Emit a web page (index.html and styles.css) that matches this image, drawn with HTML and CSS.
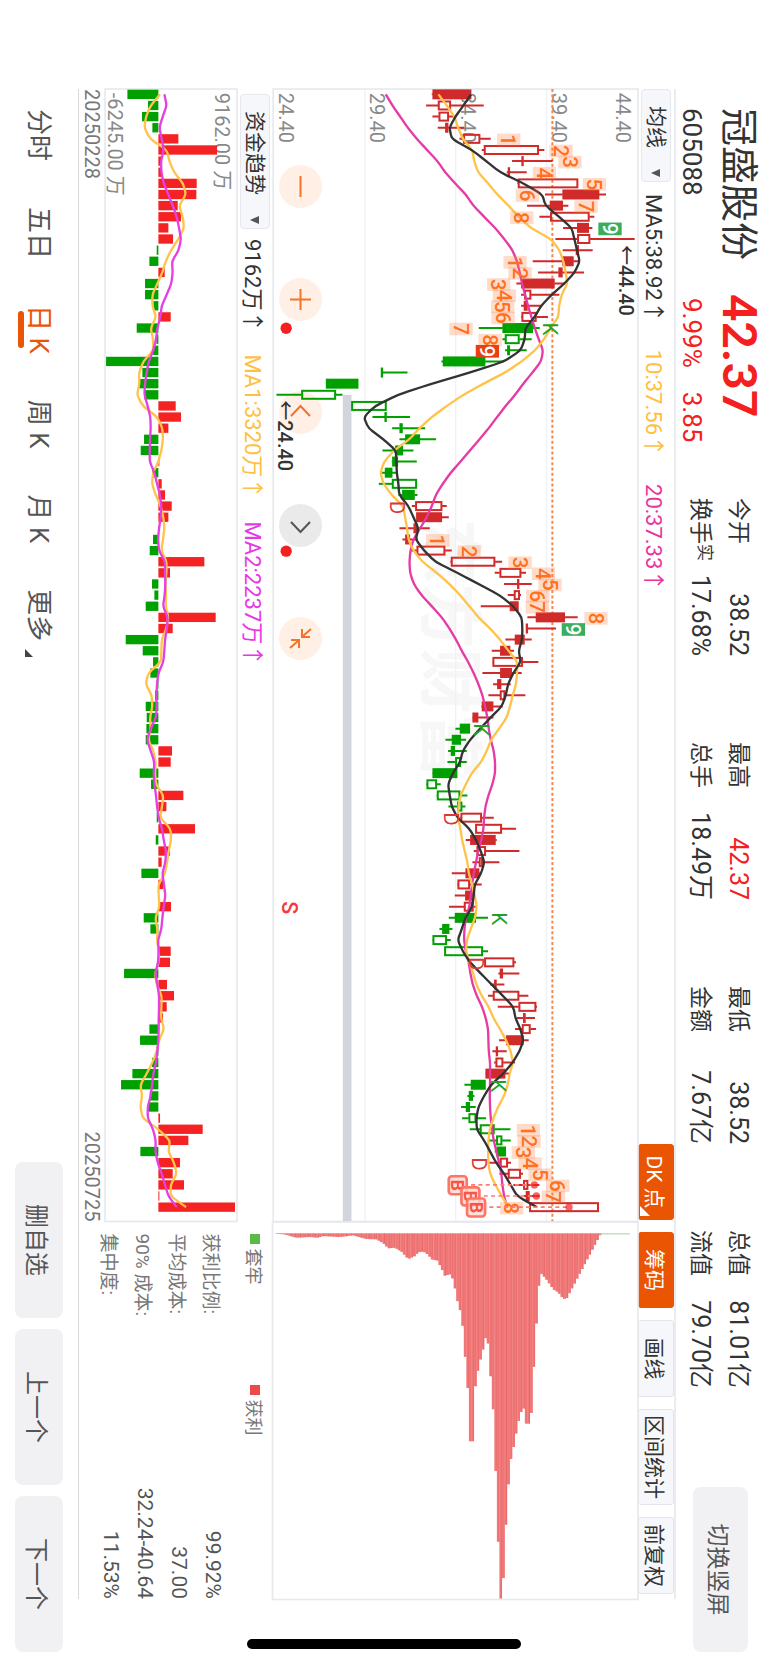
FILE: index.html
```html
<!DOCTYPE html>
<html lang="zh-CN">
<head>
<meta charset="utf-8">
<meta name="viewport" content="width=device-width, initial-scale=1">
<title>冠盛股份 605088</title>
<link rel="stylesheet" href="styles.css">
</head>
<body>
<div class="screen">
  <header class="quote">
    <div class="quote-main">
      <h1 class="name">冠盛股份</h1>
      <strong class="price">42.37</strong>
      <span class="code">605088</span>
      <span class="change"><span>9.99%</span><span>3.85</span></span>
    </div>
    <dl class="stats">
      <div class="stat"><dt>今开</dt><dd>38.52</dd></div>
      <div class="stat"><dt>最高</dt><dd class="up">42.37</dd></div>
      <div class="stat"><dt>最低</dt><dd>38.52</dd></div>
      <div class="stat"><dt>总值</dt><dd>81.01亿</dd></div>
      <div class="stat"><dt>换手<sup>实</sup></dt><dd>17.68%</dd></div>
      <div class="stat"><dt>总手</dt><dd>18.49万</dd></div>
      <div class="stat"><dt>金额</dt><dd>7.67亿</dd></div>
      <div class="stat"><dt>流值</dt><dd>79.70亿</dd></div>
    </dl>
    <button class="btn btn-orient" type="button">切换竖屏</button>
  </header>

  <main class="board">
    <div class="toolbar">
      <span class="picker"><select aria-label="主图指标"><option>均线</option></select></span>
      <span class="ma ma5">MA5:38.92↑</span>
      <span class="ma ma10">10:37.56↑</span>
      <span class="ma ma20">20:37.33↑</span>
      <div class="tools">
        <button class="tool on corner" type="button">DK 点</button>
        <button class="tool on" type="button">筹码</button>
        <button class="tool" type="button">画线</button>
        <button class="tool wide" type="button">区间统计</button>
        <button class="tool" type="button">前复权</button>
      </div>
    </div>

    <div class="panel">
      <svg class="plot" id="kline" viewBox="0 0 3399 1095" role="img" aria-label="日K线图"></svg>
      <div class="pan">
        <button type="button" aria-label="缩小"><svg viewBox="0 0 43 43"><path d="M11 21.500H32"/></svg></button>
        <button type="button" aria-label="放大"><svg viewBox="0 0 43 43"><path d="M11 21.500H32M21.500 11V32"/></svg></button>
        <button type="button" aria-label="左移"><svg viewBox="0 0 43 43"><path d="M25 12L15 21.500L25 31"/></svg></button>
        <button class="grey" type="button" aria-label="右移"><svg viewBox="0 0 43 43"><path d="M18 12L28 21.500L18 31"/></svg></button>
        <button type="button" aria-label="还原"><svg viewBox="0 0 43 43"><path d="M12 11L19 19M20 12V20H12M31 32L24 24M23 31V23H31"/></svg></button>
      </div>
    </div>
    <div class="panel">
      <svg class="plot" id="chips" viewBox="0 0 1131 1095" role="img" aria-label="筹码分布"></svg>
    </div>

    <div class="flowbar">
      <span class="picker"><select aria-label="副图指标"><option>资金趋势</option></select></span>
      <span class="ma">9162万↑</span>
      <span class="ma flow1">MA1:3320万↑</span>
      <span class="ma flow2">MA2:2237万↑</span>
    </div>
    <div class="legend">
      <span class="key trapped">套牢</span>
      <span class="key profit">获利</span>
    </div>

    <div class="panel">
      <svg class="plot" id="flow" viewBox="0 0 3399 396" role="img" aria-label="资金趋势"></svg>
      <div class="dates"><time>20250228</time><time>20250725</time></div>
    </div>
    <dl class="cost">
      <div><dt>获利比例:</dt><dd>99.92%</dd></div>
      <div><dt>平均成本:</dt><dd>37.00</dd></div>
      <div><dt>90% 成本:</dt><dd>32.24-40.64</dd></div>
      <div><dt>集中度:</dt><dd>11.53%</dd></div>
    </dl>
  </main>

  <footer class="bottom">
    <nav class="tabs">
      <a href="#">分时</a>
      <a href="#">五日</a>
      <a href="#" class="active" aria-current="page">日 K</a>
      <a href="#">周 K</a>
      <a href="#">月 K</a>
      <a href="#" class="more">更多</a>
    </nav>
    <div class="actions">
      <button class="btn" type="button">删自选</button>
      <button class="btn" type="button">上一个</button>
      <button class="btn" type="button">下一个</button>
    </div>
  </footer>
  <div class="home-indicator"></div>
</div>
<script src="chart.js"></script>
</body>
</html>
```
FILE: styles.css
```css
* { box-sizing: border-box; }

body {
  margin: 0;
  height: 100vh;
  overflow: hidden;
  background: #fff;
  color: #333;
  font-family: Roboto, "Noto Sans CJK SC", sans-serif;
}

h1, dl, dd { margin: 0; }
button, select { font: inherit; color: inherit; border: 0; padding: 0; margin: 0; }
a { color: inherit; text-decoration: none; }

/* The landscape view is turned a quarter clockwise to fill a portrait window. */
.screen {
  position: absolute;
  top: 0;
  left: 0;
  width: 100vh;
  height: 100vw;
  display: flex;
  flex-direction: column;
  transform-origin: 0 0;
  transform: translateX(100vw) rotate(90deg);
}

/* Quote header */
.quote {
  display: flex;
  align-items: flex-start;
  height: 93px;
  padding: 0 12px 0 108px;
}
.quote-main {
  display: grid;
  grid-template-columns: 186px auto;
  grid-template-rows: 60px 33px;
  align-items: center;
  width: 390px;
}
.name { font-size: 38px; font-weight: 400; line-height: 48px; }
.price { font-size: 48px; line-height: 48px; font-weight: 600; color: #f42020; }
.code { font-size: 26px; line-height: 32px; }
.change { display: flex; gap: 24px; padding-left: 4px; font-size: 26px; line-height: 32px; color: #f42020; }

.stats {
  display: grid;
  grid-template-columns: repeat(4, 158px);
  column-gap: 86px;
  grid-auto-rows: 38px;
  padding-top: 12px;
}
.stat { display: flex; justify-content: space-between; align-items: center; line-height: 38px; }
.stat dt { font-size: 23px; white-space: nowrap; }
.stat dd { font-size: 25px; white-space: nowrap; }
.stat sup { font-size: 17px; line-height: 17px; vertical-align: 6px; }
.stat .up { color: #f42020; }

.btn {
  width: 156px;
  height: 48px;
  border-radius: 8px;
  background: #f1f1f4;
  color: #555;
  font-size: 24px;
}
.btn-orient { width: 165px; height: 55px; margin: 21px 0 0 auto; font-size: 23px; }

/* Chart board */
.board {
  display: grid;
  grid-template-columns: minmax(0, 3fr) minmax(0, 1fr);
  margin: 0 65px 0 89px;
  border-top: 2px solid #ebecf0;
}
.toolbar {
  grid-column: 1 / -1;
  display: flex;
  align-items: center;
  height: 36px;
  font-size: 22px;
}
.picker { position: relative; margin-right: 12px; }
.picker select {
  appearance: none;
  display: block;
  height: 30px;
  padding: 0 33px 0 16px;
  border: 1px solid #e6e8ee;
  border-radius: 4px;
  background: #f6f7fa;
  font-size: 21px;
}
.picker::after {
  content: "";
  position: absolute;
  right: 5px;
  top: 11px;
  border: solid transparent;
  border-width: 9px 4px 0;
  border-top-color: #555;
  pointer-events: none;
}
.ma { margin-right: 27px; white-space: nowrap; }
.ma10, .flow1 { color: #ffbf40; }
.ma20 { color: #e8359f; }
.flow2 { color: #e638e6; }

.tools { display: flex; gap: 12px; margin: 0 5px 0 auto; }
.tool {
  position: relative;
  width: 77px;
  height: 36px;
  border: 1px solid #e3e5eb;
  border-radius: 3px;
  background: #f6f7fa;
  font-size: 21px;
  white-space: nowrap;
}
.tool.wide { width: 96px; }
.tool.on { width: 76px; border-color: #ea5504; background: #ea5504; color: #fff; }
.corner::after {
  content: "";
  position: absolute;
  right: 3px;
  bottom: 1px;
  border: solid transparent;
  border-width: 0 0 10px 10px;
  border-bottom-color: #fff;
}

.panel { position: relative; }
.plot { position: relative; z-index: 1; display: block; width: 100%; overflow: visible; pointer-events: none; }
.pan { position: absolute; left: 76px; bottom: 6px; display: flex; gap: 70px; }
.pan button { width: 43px; height: 43px; border-radius: 50%; background: rgba(255, 228, 212, .6); color: #f37429; }
.pan .grey { background: rgba(225, 225, 225, .7); color: #555; }
.pan svg { display: block; fill: none; stroke: currentColor; stroke-width: 2; }

.flowbar { display: flex; align-items: center; height: 36px; padding-left: 5px; font-size: 22px; }
.flowbar .picker { margin-right: 10px; }
.flowbar .ma { margin-right: 22px; }
.legend { display: flex; align-items: center; gap: 100px; padding-left: 12px; font-size: 18px; color: #777; }
.key { display: flex; align-items: center; gap: 5px; width: 51px; white-space: nowrap; }
.key::before { content: ""; width: 10px; height: 10px; }
.trapped::before { background: #5aba47; }
.profit::before { background: #ec4a4a; }

.dates { display: flex; justify-content: space-between; height: 26px; align-items: center; font-size: 20px; color: #777; }
.cost { padding: 7px 0 0 12px; }
.cost div { display: flex; justify-content: space-between; align-items: center; height: 34px; }
.cost dt { font-size: 19px; color: #777; }
.cost dd { font-size: 21px; color: #555; }

/* Period tabs */
.bottom {
  display: flex;
  justify-content: space-between;
  padding: 16px 12px 0 20px;
  margin-left: 89px;
  position: relative;
}
.bottom::before { content: ""; position: absolute; left: 0; right: 65px; top: 0; border-top: 1px solid #d8d9df; }
.tabs { display: flex; gap: 46px; font-size: 26px; line-height: 48px; color: #555; }
.tabs a { position: relative; }
.tabs .active { color: #ea5504; }
.tabs .active::after {
  content: "";
  position: absolute;
  left: 6px;
  right: 6px;
  bottom: 3px;
  height: 6px;
  border-radius: 3px;
  background: #ea5504;
}
.tabs .more::after {
  content: "";
  position: absolute;
  right: -16px;
  bottom: 10px;
  border: solid transparent;
  border-width: 0 0 8px 8px;
  border-bottom-color: #444;
}
.actions { display: flex; gap: 11px; }
.home-indicator {
  position: absolute;
  right: 15px;
  top: 248px;
  width: 10px;
  height: 274px;
  border-radius: 5px;
  background: #000;
}

/* Chart marks */
svg text { font-family: Roboto, "Noto Sans CJK SC", sans-serif; }
.frame { fill: none; stroke: #e8e9ee; stroke-width: 5; }
.grid { stroke: #f0f0f6; stroke-width: 4; }
.watermark { fill: #f7f7f7; font-size: 195px; font-weight: 700; }
.axis { fill: #888; font-size: 60px; }
.last { stroke: #f48a4a; stroke-width: 6; stroke-dasharray: 9 7; }
.cost-bar { fill: #d3d5dc; }
.red { stroke: #d02a2a; }
.green { stroke: #00a000; }
.candle { stroke-width: 6; fill: none; }
.candle.red.solid { fill: #d02a2a; }
.candle.green.solid { fill: #00a000; }
.line { fill: none; stroke-width: 7; stroke-linejoin: round; }
.black { stroke: #333; }
.yellow { stroke: #ffc34a; }
.pink { stroke: #e63aa5; }
.violet { stroke: #e440e4; }
.nine { font-size: 62px; font-weight: 500; fill: #ff7020; text-anchor: middle; }
.nine-box { fill: #ff8040; fill-opacity: .28; }
.nine.inv { fill: #fff; }
.nine-box.sell { fill: #3aae5c; fill-opacity: 1; }
.nine-box.buy { fill: #e84010; fill-opacity: 1; }
.mark { font-size: 62px; text-anchor: middle; }
.mark.k { fill: #22a022; }
.mark.d { fill: #d83a3a; }
.extreme { font-size: 60px; font-weight: 500; fill: #333; }
.dot { fill: #f42020; }
.buy-mark { fill: #ffd8d0; fill-opacity: .8; stroke: #ff7464; stroke-width: 8; }
.buy-text { font-size: 54px; font-weight: 700; fill: #f65548; text-anchor: middle; }
.buy-line { stroke: #ff7a70; stroke-width: 5; stroke-dasharray: 12 10; }
.sell-text { font-size: 64px; font-weight: 500; fill: #f43a3a; text-anchor: middle; }
.bar-in { fill: #f42222; }
.bar-out { fill: #00a000; }
.chip { fill: #f07878; }
.chip.deep { fill: #eb6868; }
.chip-free { fill: #9bd89b; }
```
FILE: chart.js
```js
const NS = 'http://www.w3.org/2000/svg';
const PITCH = 33.4;
const cx = i => 16 + PITCH * i;

function add(svg, tag, attrs, text) {
  const el = document.createElementNS(NS, tag);
  for (const k in attrs) el.setAttribute(k, attrs[k]);
  if (text !== undefined) el.textContent = text;
  svg.appendChild(el);
  return el;
}

function line(svg, values, top, cls) {
  const pts = values.map((v, i) => [cx(i), top - v]);
  let d = 'M' + pts[0];
  for (let i = 1; i < pts.length - 1; i++) {
    const [x, y] = pts[i], [px, py] = pts[i - 1], [nx, ny] = pts[i + 1];
    d += `L${x + (px - x) * .3},${y + (py - y) * .3}Q${x},${y} ${x + (nx - x) * .3},${y + (ny - y) * .3}`;
  }
  d += 'L' + pts[pts.length - 1];
  add(svg, 'path', { d, class: 'line ' + cls });
}

/* K-line: low, body low, body high, high, kind (upper case = filled) */
const TOP = 1134;
const candles = `515 518 633 633 R|498 534 572 671 r|517 536 566 584 r|533 556 564 612 R|598 610 660 692 r|665 672 836 853 r|756 786 790 878 R|740 745 749 800 R|772 774 954 954 r|855 908 1017 1038 R|801 870 908 925 R|838 871 988 1003 r|909 952 986 997 R|886 952 990 1124 r|908 948 956 998 R|818 908 940 958 R|834 896 907 972 R|769 784 883 915 R|783 793 813 898 r|783 792 802 845 r|783 785 829 864 r|656 728 818 839 G|727 735 778 815 g|735 742 749 800 G|544 549 675 730 G|364 365 368 442 G|198 198 294 294 G|49 124 227 247 g|273 274 379 379 g|337 375 379 450 G|396 419 427 495 G|418 436 479 528 G|367 406 428 460 G|395 397 413 470 G|361 375 396 412 G|356 396 470 470 g|415 427 463 472 G|455 466 546 560 r|467 469 545 566 R|418 461 471 509 R|427 436 449 472 R|453 470 555 575 r|571 573 705 726 r|704 719 783 798 r|732 773 777 815 R|743 762 779 783 r|662 750 775 775 R|802 828 914 953 R|800 801 803 888 R|736 765 793 815 R|695 721 750 762 R|697 698 788 835 r|667 721 755 785 R|699 712 723 752 R|685 720 735 796 r|664 666 699 728 R|637 638 654 700 R|586 600 629 630 G|556 576 602 618 G|564 573 584 620 G|562 586 602 620 g|517 518 591 591 G|498 500 530 542 g|530 531 600 622 g|565 592 606 616 g|600 602 665 701 r|645 646 725 768 r|617 631 706 710 R|641 650 677 778 r|637 657 668 718 r|575 617 657 662 R|591 593 629 665 r|584 616 637 640 R|567 612 640 650 r|566 585 647 684 G|538 547 567 577 G|517 518 560 572 g|552 553 668 684 g|670 673 762 768 r|715 720 728 778 R|690 703 709 733 R|684 699 777 805 r|713 776 828 831 r|770 790 796 825 R|765 786 811 828 r|717 739 790 806 R|697 708 713 740 R|702 707 729 765 r|676 677 735 748 R|613 633 676 676 G|622 627 638 643 G|603 618 629 647 G|606 626 648 678 g|629 660 703 751 g|684 709 726 752 g|704 710 737 737 G|685 720 743 753 r|718 744 782 789 r|760 790 804 838 r|791 798 808 838 r|806 808 1016 1016 r`
  .split('|').map(s => s.split(' '));

const ma5 = [633,610,586,568,575,636,678,720,790,847,856,897,935,943,951,959,944,913,875,843,824,796,794,782,733,630,515,414,345,311,325,370,407,409,410,415,417,445,460,475,467,492,525,592,655,718,760,785,787,786,776,782,760,744,737,725,692,660,630,608,600,578,564,569,575,592,628,648,662,673,663,644,641,636,616,605,593,608,630,662,695,728,760,766,781,790,778,758,730,693,672,655,649,650,672,690,708,732,752,771,831];
const ma10 = [535,560,583,594,608,637,642,654,684,712,745,776,812,873,898,910,917,922,905,897,895,872,852,825,785,735,670,610,560,515,478,448,402,372,361,370,395,429,435,441,445,460,487,530,568,600,628,655,690,720,745,772,771,768,758,750,740,717,693,680,663,635,617,602,595,594,601,606,614,622,626,636,644,650,645,632,620,618,628,639,649,665,686,700,720,738,752,759,749,743,732,714,700,689,685,684,685,690,706,725,745];
const ma20 = [377,397,420,443,470,501,532,555,585,617,640,672,705,733,757,771,779,786,795,804,814,824,836,849,843,817,790,765,737,711,686,658,630,601,572,548,527,515,500,480,460,451,448,450,461,484,515,545,568,588,605,624,641,655,667,675,682,686,692,701,705,705,697,685,676,672,670,664,654,648,641,636,632,628,617,613,612,617,626,631,638,650,666,677,684,685,686,690,690,690,689,690,692,696,701,709,717,724,727,732,741];

const k = document.getElementById('kline');
add(k, 'text', { x: 1290, y: 632, class: 'watermark' }, '东方财富');
[365, 455.600, 546.500].forEach(p => {
  const y = TOP - (p - 260) * 3;
  add(k, 'line', { x1: 0, x2: 3399, y1: y, y2: y, class: 'grid' });
});
add(k, 'rect', { x: 0, y: 0, width: 3399, height: 1095, class: 'frame' });
add(k, 'rect', { x: 918, y: 860, width: 2481, height: 26, class: 'cost-bar' });
[['44.40', 67], ['39.40', 258], ['34.40', 531], ['29.40', 805], ['24.40', 1078]]
  .forEach(([t, y]) => add(k, 'text', { x: 11, y, class: 'axis' }, t));
add(k, 'line', { x1: 0, x2: 3399, y1: 257, y2: 257, class: 'last' });

candles.forEach((c, i) => {
  const [lo, a, b, hi] = c.map(Number), kind = c[4];
  const color = /r/i.test(kind) ? 'red' : 'green';
  const solid = kind < 'a';
  const x = cx(i);
  add(k, 'path', { d: `M${x} ${TOP - hi}V${TOP - b}M${x} ${TOP - a}V${TOP - lo}`, class: 'candle ' + color });
  add(k, 'rect', { x: x - 12, y: TOP - b + 2, width: 24, height: Math.max(1, b - a - 4), class: `candle ${color}${solid ? ' solid' : ''}` });
});

line(k, ma20, TOP, 'pink');
line(k, ma10, TOP, 'yellow');
line(k, ma5, TOP, 'black');

/* Nine-turn counts: [candle, height, digit] */
[[4,746,1],[5,903,2],[6,930,3],[7,853,4],[8,1003,5],[9,802,6],[10,978,7],[11,785,8],[12,1050,9,'sell'],
 [15,765,1],[16,780,2],[17,716,3],[18,733,4],[19,728,5],[20,729,6],[21,603,7],[22,690,8],[23,682,9,'buy'],
 [40,533,1],[41,627,2],[42,780,3],[43,850,4],[44,870,5],[45,833,6],[46,832,7],[47,1008,8],[48,940,9,'sell'],
 [93,805,1],[94,807,2],[95,790,3],[96,810,4],[97,840,5],[98,893,6],[99,880,7],[100,755,8]]
  .forEach(([i, v, n, kind]) => {
    const x = cx(i) + 3, y = TOP - v;
    add(k, 'rect', { x: x - 19, y: y - 35, width: 38, height: 70, class: 'nine-box ' + (kind || '') });
    add(k, 'text', { x, y: y + 22, class: 'nine' + (kind ? ' inv' : '') }, n);
  });
[[21,872],[57,663],[74,719],[89,715]].forEach(([i, v]) => add(k, 'text', { x: cx(i) + 3, y: TOP - v + 22, class: 'mark k' }, 'K'));
[[37,413],[65,573],[78,648],[96,657]].forEach(([i, v]) => add(k, 'text', { x: cx(i) + 4, y: TOP - v + 22, class: 'mark d' }, 'D'));

add(k, 'text', { x: 468, y: 58, class: 'extreme' }, '←44.40');
add(k, 'text', { x: 934, y: 1081, class: 'extreme' }, '←24.40');
add(k, 'circle', { cx: 718, cy: 1056, r: 17, class: 'dot' });
add(k, 'circle', { cx: 1387, cy: 1056, r: 17, class: 'dot' });
add(k, 'text', { x: 2457, y: 1068, class: 'sell-text' }, 'S');

[[98,593,823],[99,631,829],[100,648,927]].forEach(([i, v, p]) => {
  const x = cx(i), y = TOP - v;
  add(k, 'line', { x1: x, x2: x, y1: y - 40, y2: TOP - p, class: 'buy-line' });
  add(k, 'circle', { cx: x, cy: TOP - p, r: 11, class: 'dot', 'fill-opacity': .7 });
  add(k, 'rect', { x: x - 26, y: y - 27, width: 54, height: 54, rx: 9, class: 'buy-mark' });
  add(k, 'text', { x: x + 1, y: y + 19, class: 'buy-text' }, 'B');
});

/* Capital flow */
const ZERO = 475, FTOP = 711;
const bars = [382,444,426,457,535,651,483,485,590,589,533,543,505,519,470,448,494,435,435,460,512,410,469,457,318,427,417,433,527,543,505,432,422,478,457,485,495,515,505,475,459,449,613,510,456,463,437,647,518,377,428,459,451,470,465,437,440,439,437,516,512,419,453,550,499,470,585,467,510,485,424,490,475,513,431,451,475,512,510,372,501,522,500,489,448,420,468,456,397,363,449,444,480,608,565,421,540,518,552,478,705];
const flow1 = [480,452,438,433,450,500,508,522,549,558,537,548,552,535,513,497,487,472,457,457,468,452,459,460,430,417,418,411,428,472,487,489,484,475,459,456,467,482,490,493,489,484,500,499,496,498,497,505,499,485,484,483,445,437,455,457,450,452,445,460,467,465,468,490,486,480,512,513,506,501,495,475,476,478,466,472,471,476,476,465,470,485,484,483,492,477,470,457,440,421,426,421,428,475,510,505,522,530,512,512,558];
const flow2 = [493,500,488,478,485,491,483,484,491,505,518,530,537,543,536,516,518,514,500,485,481,472,468,460,446,440,435,433,443,451,452,450,449,449,463,471,480,484,482,477,474,477,495,495,496,494,489,503,501,495,493,490,475,471,469,470,468,452,441,452,463,461,463,468,471,476,486,491,498,496,487,492,496,491,487,484,474,476,474,466,472,477,477,476,476,475,472,468,460,456,452,443,443,459,467,466,473,485,495,505,530];

const f = document.getElementById('flow');
add(f, 'rect', { x: 0, y: 0, width: 3399, height: 396, class: 'frame' });
add(f, 'text', { x: 11, y: 66, class: 'axis' }, '9162.00 万');
add(f, 'text', { x: 11, y: 386, class: 'axis' }, '-6245.00 万');
bars.forEach((v, i) => {
  const up = v >= ZERO;
  add(f, 'rect', { x: cx(i) - 14, y: FTOP - Math.max(v, ZERO), width: 28, height: Math.abs(v - ZERO), class: up ? 'bar-in' : 'bar-out' });
});
line(f, flow1, FTOP, 'yellow');
line(f, flow2, FTOP, 'violet');

/* Chip distribution: [price height, volume] */
const env = [[45,41],[75,43],[110,53],[150,51],[175,53],[190,48],[240,51],[280,46],[320,57],[350,58],[370,69],[385,85],[405,83],[425,95],[445,117],[465,108],[475,97],[490,94],[505,104],[515,118],[535,122],[545,150],[553,167],[570,163],[578,175],[585,205],[592,243],[600,270],[607,317],[615,410],[622,503],[630,663],[638,663],[645,498],[652,452],[660,418],[668,388],[675,354],[683,370],[690,468],[698,567],[706,752],[714,964],[721,1134],[729,1073],[737,913],[744,792],[752,716],[759,680],[767,640],[774,602],[782,575],[790,565],[798,610],[805,610],[813,578],[820,440],[828,310],[836,197],[843,160],[857,175],[880,208],[895,217],[910,237],[920,235],[1020,45]];
const c = document.getElementById('chips');
add(c, 'rect', { x: 0, y: 0, width: 1131, height: 1095, class: 'frame' });
for (let n = 0; n < 128; n++) {
  const v = 52 + n * 7.620;
  let j = env.findIndex(e => e[0] >= v);
  if (j < 1) continue;
  const [x0, y0] = env[j - 1], [x1, y1] = env[j];
  const w = x1 - x0 <= 8 ? (v - x0 < x1 - v ? y0 : y1) : y0 + (y1 - y0) * (v - x0) / (x1 - x0);
  add(c, 'rect', { x: 34, y: TOP - v - 4, width: w - 40, height: 7.800, class: 'chip' });
  add(c, 'rect', { x: 34, y: TOP - v - 4, width: w - 40, height: n % 3 ? 2 : 3, class: 'chip deep' });
}
add(c, 'rect', { x: 34, y: TOP - 1110, width: 3, height: 90, class: 'chip-free' });
```
